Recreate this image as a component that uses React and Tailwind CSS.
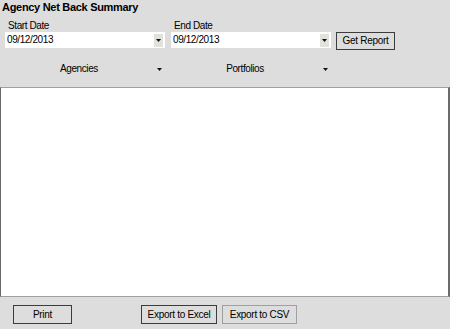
import React from 'react';

const Arrow = () => (
    <svg width="5" height="3" viewBox="0 0 5 3" className="block">
        <path d="M0 0h5L2.5 3z" fill="#111" />
    </svg>
);

const DateBox = ({ label, value }) => (
    <div className="flex flex-col w-[160px]">
        <div className="h-[12px] leading-[12px] pl-[3px] text-[10px] tracking-[-0.4px]">{label}</div>
        <div className="h-[16px] bg-white flex items-center justify-between pl-[2px] pr-[2px]">
            <span className="text-[10px] leading-[16px] tracking-[-0.4px]">{value}</span>
            <div className="w-[9px] h-[13px] bg-[#e2e2dc] flex items-center justify-center">
                <Arrow />
            </div>
        </div>
    </div>
);

const FilterHeader = ({ label }) => (
    <div className="w-[160px] h-[14px] flex items-center">
        <div className="flex-1 text-center text-[10px] leading-[14px] tracking-[-0.4px]">{label}</div>
        <div className="w-[12px] flex justify-center">
            <Arrow />
        </div>
    </div>
);

const WinButton = ({ children, width, light }) => (
    <button
        type="button"
        className={`h-[19px] ${width} border ${light ? 'border-[#a0a0a0]' : 'border-[#3c3c3c]'} bg-[#dddddd] text-[10px] leading-[17px] tracking-[-0.3px] text-black`}
    >
        {children}
    </button>
);

const App = () => {
    return (
        <div className="w-[450px] h-[329px] bg-[#dddddd] flex flex-col text-black font-['Liberation_Sans',Arial,sans-serif]">
            {/* title */}
            <div className="h-[14px] px-[2px] text-[11px] leading-[14px] font-bold tracking-[-0.3px]">Agency Net Back Summary</div>

            {/* date pickers */}
            <div className="flex items-start mt-[6px] pl-[5px]">
                <DateBox label="Start Date" value="09/12/2013" />
                <div className="ml-[6px]">
                    <DateBox label="End Date" value="09/12/2013" />
                </div>
                <button
                    type="button"
                    className="ml-[5px] mt-[12px] w-[59px] h-[18px] border border-[#3c3c3c] bg-[#dddddd] text-[10px] leading-[16px] tracking-[-0.3px]"
                >
                    Get Report
                </button>
            </div>

            {/* filters */}
            <div className="flex mt-[12px] pl-[5px] gap-[6px]">
                <FilterHeader label="Agencies" />
                <FilterHeader label="Portfolios" />
            </div>

            {/* report area */}
            <div className="mt-[11px] h-[210px] w-[450px] bg-white border-t border-t-[#a0a0a0] border-l border-l-[#6a6a6a] border-r-2 border-r-[#6a6a6a] border-b border-b-[#a0a0a0]"></div>

            {/* actions */}
            <div className="flex mt-[8px] pl-[13px]">
                <WinButton width="w-[59px]">Print</WinButton>
                <div className="ml-[69px] flex gap-[5px]">
                    <WinButton width="w-[76px]">Export to Excel</WinButton>
                    <WinButton width="w-[75px]" light>Export to CSV</WinButton>
                </div>
            </div>
        </div>
    );
};

export default App;
